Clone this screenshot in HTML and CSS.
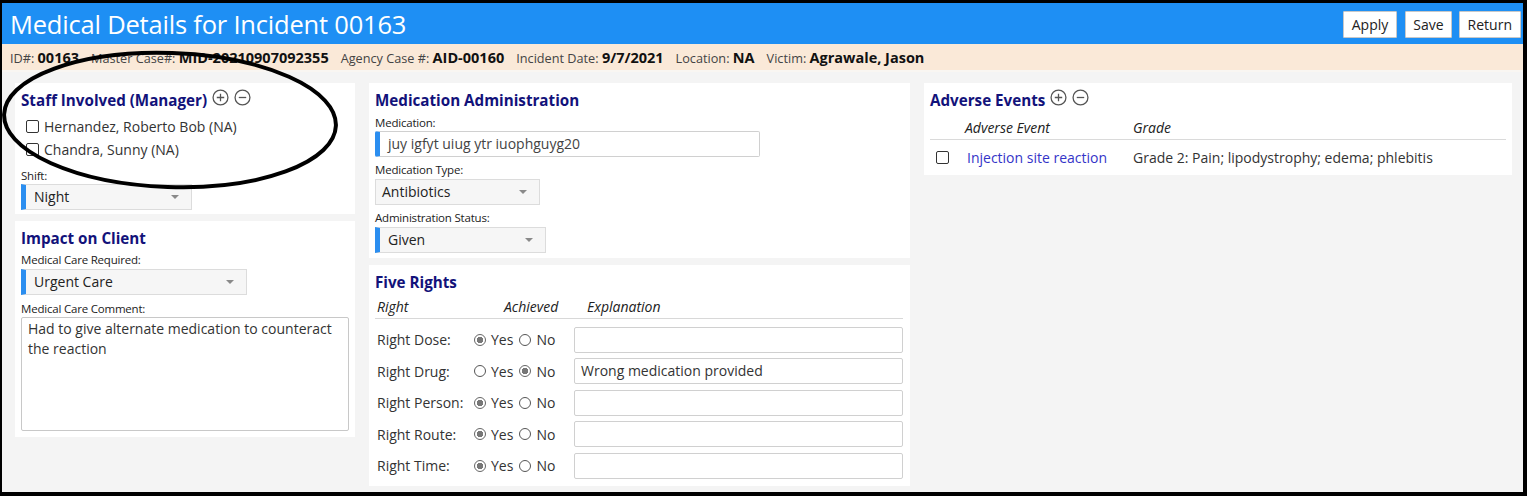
FILE: index.html
```html
<!DOCTYPE html>
<html>
<head>
<meta charset="utf-8">
<title>Medical Details for Incident 00163</title>
<link rel="stylesheet" href="styles.css">
</head>
<body>
<div class="frame">
  <header class="titlebar">
    <h1 class="page-title">Medical Details for Incident 00163</h1>
    <div class="actions">
      <button class="btn btn-apply">Apply</button>
      <button class="btn btn-save">Save</button>
      <button class="btn">Return</button>
    </div>
  </header>
  <div class="infobar">
    <span class="info"><span class="info-lbl">ID#:</span> <b>00163</b></span>
    <span class="info"><span class="info-lbl">Master Case#:</span> <b>MID-20210907092355</b></span>
    <span class="info"><span class="info-lbl">Agency Case #:</span> <b>AID-00160</b></span>
    <span class="info"><span class="info-lbl">Incident Date:</span> <b>9/7/2021</b></span>
    <span class="info"><span class="info-lbl">Location:</span> <b>NA</b></span>
    <span class="info"><span class="info-lbl">Victim:</span> <b>Agrawale, Jason</b></span>
  </div>
  <main class="content">
    <div class="col col-left">
      <section class="panel staff">
        <h2 class="panel-title">Staff Involved (Manager)
          <span class="icons">
            <svg class="ico" viewBox="0 0 16 16"><circle cx="8" cy="8" r="7" /><path d="M8 4.5v7M4.5 8h7" /></svg>
            <svg class="ico" viewBox="0 0 16 16"><circle cx="8" cy="8" r="7" /><path d="M4.5 8h7" /></svg>
          </span>
        </h2>
        <label class="check-row"><input type="checkbox" class="cb"> Hernandez, Roberto Bob (NA)</label>
        <label class="check-row"><input type="checkbox" class="cb"> Chandra, Sunny (NA)</label>
        <div class="field-lbl">Shift:</div>
        <div class="select req w-shift"><span>Night</span></div>
      </section>
      <section class="panel impact">
        <h2 class="panel-title">Impact on Client</h2>
        <div class="field-lbl">Medical Care Required:</div>
        <div class="select req w-care"><span>Urgent Care</span></div>
        <div class="field-lbl">Medical Care Comment:</div>
        <div class="textarea">Had to give alternate medication to counteract the reaction</div>
      </section>
    </div>
    <div class="col col-mid">
      <section class="panel medadmin">
        <h2 class="panel-title">Medication Administration</h2>
        <div class="field-lbl">Medication:</div>
        <div class="input req w-med">juy igfyt uiug ytr iuophguyg20</div>
        <div class="field-lbl">Medication Type:</div>
        <div class="select w-type"><span>Antibiotics</span></div>
        <div class="field-lbl">Administration Status:</div>
        <div class="select req w-status"><span>Given</span></div>
      </section>
      <section class="panel rights">
        <h2 class="panel-title">Five Rights</h2>
        <div class="rights-grid">
          <div class="rh rh-right">Right</div>
          <div class="rh rh-ach">Achieved</div>
          <div class="rh rh-exp">Explanation</div>

          <div class="r-lbl">Right Dose:</div>
          <div class="r-opts"><span class="radio on"></span>Yes<span class="radio gap"></span>No</div>
          <div class="input r-inp"></div>

          <div class="r-lbl">Right Drug:</div>
          <div class="r-opts"><span class="radio"></span>Yes<span class="radio on gap"></span>No</div>
          <div class="input r-inp">Wrong medication provided</div>

          <div class="r-lbl">Right Person:</div>
          <div class="r-opts"><span class="radio on"></span>Yes<span class="radio gap"></span>No</div>
          <div class="input r-inp"></div>

          <div class="r-lbl">Right Route:</div>
          <div class="r-opts"><span class="radio on"></span>Yes<span class="radio gap"></span>No</div>
          <div class="input r-inp"></div>

          <div class="r-lbl">Right Time:</div>
          <div class="r-opts"><span class="radio on"></span>Yes<span class="radio gap"></span>No</div>
          <div class="input r-inp"></div>
        </div>
      </section>
    </div>
    <div class="col col-right">
      <section class="panel adverse">
        <h2 class="panel-title">Adverse Events
          <span class="icons">
            <svg class="ico" viewBox="0 0 16 16"><circle cx="8" cy="8" r="7" /><path d="M8 4.5v7M4.5 8h7" /></svg>
            <svg class="ico" viewBox="0 0 16 16"><circle cx="8" cy="8" r="7" /><path d="M4.5 8h7" /></svg>
          </span>
        </h2>
        <div class="ae-grid">
          <div class="ae-h"></div>
          <div class="ae-h">Adverse Event</div>
          <div class="ae-h">Grade</div>
          <div class="ae-c"><input type="checkbox" class="cb"></div>
          <div class="ae-c"><a class="ae-link">Injection site reaction</a></div>
          <div class="ae-c">Grade 2: Pain; lipodystrophy; edema; phlebitis</div>
        </div>
      </section>
    </div>
  </main>
</div>
<svg class="annotation" width="1527" height="496" viewBox="0 0 1527 496">
  <ellipse cx="170" cy="120" rx="166" ry="67" transform="rotate(2 170 120)" />
</svg>
</body>
</html>
```

FILE: styles.css
```css
html, body {
  margin: 0;
  padding: 0;
}
body {
  position: relative;
  width: 1527px;
  height: 496px;
  overflow: hidden;
  font-family: "Open Sans", "Noto Sans", "DejaVu Sans", sans-serif;
  color: #333;
  background: #000;
}
.frame {
  width: 1527px;
  height: 496px;
  box-sizing: border-box;
  border-style: solid;
  border-color: #000;
  border-width: 3px 4px 4px 2px;
  display: flex;
  flex-direction: column;
  background: #f4f4f4;
}
.titlebar {
  height: 41px;
  flex: none;
  background: #1e8ff4;
  display: flex;
  align-items: center;
  justify-content: space-between;
  padding: 0 2px 0 8px;
}
.page-title {
  margin: 0;
  font-size: 25.5px;
  font-weight: 400;
  color: #fff;
  letter-spacing: -0.2px;
}
.actions {
  display: flex;
  gap: 7px;
  padding-top: 2px;
}
.btn {
  height: 27px;
  padding: 0 8px;
  background: #fff;
  border: 1px solid #c8c8c8;
  border-radius: 1px;
  font-family: inherit;
  font-size: 14px;
  color: #222;
}
.btn-apply {
  margin-right: 1px;
}
.btn-save {
  padding: 0 7px;
}
.infobar {
  height: 26px;
  flex: none;
  background: #fae9d8;
  border-bottom: 2px solid #f9f6f2;
  display: flex;
  align-items: center;
  padding-left: 8px;
  font-size: 12.7px;
  color: #444;
}
.info {
  margin-right: 12px;
  white-space: pre;
}
.info b {
  font-size: 14.5px;
  color: #111;
}
.content {
  flex: 1;
  display: flex;
  align-items: flex-start;
  gap: 14px;
  padding: 11px 11px 0 13px;
}
.col {
  display: flex;
  flex-direction: column;
  gap: 7px;
}
.col-left { width: 340px; }
.col-mid { width: 541px; }
.col-right { width: 588px; }
.panel {
  background: #fff;
  padding: 6px 6px 5px;
  box-sizing: border-box;
}
.panel-title {
  margin: 0;
  height: 22px;
  font-size: 15.2px;
  line-height: 22px;
  font-weight: 700;
  color: #12127a;
  white-space: nowrap;
}
.icons {
  display: inline-flex;
  align-items: center;
  height: 22px;
  gap: 5px;
  margin-left: 1px;
  vertical-align: top;
  transform: translateY(-3px);
}
.ico {
  width: 17px;
  height: 17px;
  fill: none;
  stroke: #555;
  stroke-width: 1.2;
}
.check-row {
  display: flex;
  align-items: center;
  height: 23px;
  padding-left: 5px;
  font-size: 14px;
}
.staff .check-row:first-of-type {
  margin-top: 4px;
}
.cb {
  appearance: none;
  -webkit-appearance: none;
  width: 13px;
  height: 13px;
  margin: 0 5px 0 0;
  border: 1px solid #333;
  border-radius: 2px;
  background: #fff;
  box-sizing: border-box;
  flex: none;
}
.field-lbl {
  margin-top: 6px;
  font-size: 11.5px;
  line-height: 14px;
  color: #222;
  letter-spacing: -0.2px;
}
.staff .field-lbl {
  margin-top: 8px;
}
.select, .input {
  position: relative;
  margin-top: 2px;
  height: 26px;
  box-sizing: border-box;
  border: 1px solid #dcdcdc;
  font-size: 14px;
  line-height: 24px;
  color: #222;
  white-space: nowrap;
}
.select {
  background: #f6f6f6;
  padding-left: 6px;
}
.select::after {
  content: "";
  position: absolute;
  right: 12px;
  top: 10px;
  border-left: 4px solid transparent;
  border-right: 4px solid transparent;
  border-top: 4px solid #8a8a8a;
}
.input {
  background: #fff;
  border-color: #d0d0d0;
  border-radius: 2px;
  padding-left: 6px;
}
.req {
  border-left: 5px solid #2b8ef0;
  padding-left: 8px;
}
.w-shift { width: 171px; }
.w-care { width: 226px; }
.w-type { width: 165px; }
.w-status { width: 171px; }
.w-med {
  width: 385px;
  color: #444;
  margin-top: 1px;
  margin-bottom: 1px;
}
.staff {
  padding-bottom: 4px;
}
.staff .select {
  margin-top: 1px;
}
.impact {
  padding-bottom: 6px;
}
.impact .panel-title + .field-lbl {
  margin-top: 4px;
}
.impact .select + .field-lbl {
  margin-top: 7px;
}
.textarea {
  margin-top: 1px;
  height: 114px;
  box-sizing: border-box;
  border: 1px solid #c8c8c8;
  border-radius: 2px;
  padding: 1px 6px;
  font-size: 14px;
  line-height: 20px;
  color: #333;
}
.medadmin .panel-title + .field-lbl {
  margin-top: 5px;
}
.rights {
  padding-bottom: 7px;
}
.rights-grid {
  display: grid;
  grid-template-columns: 99px 100px 329px;
  grid-template-rows: 24px;
  grid-auto-rows: 26px;
  row-gap: 5.5px;
  align-items: center;
  margin-top: 4px;
}
.rh {
  font-style: italic;
  font-size: 14px;
  height: 21px;
  line-height: 20px;
  align-self: start;
  border-bottom: 1px solid #d8d8d8;
  color: #222;
}
.rh-right { padding-left: 2px; }
.rh-ach { padding-left: 30px; }
.rh-exp { padding-left: 13px; }
.r-lbl {
  font-size: 14px;
  padding-left: 2px;
  white-space: nowrap;
}
.r-opts {
  font-size: 14px;
  display: flex;
  align-items: center;
  white-space: pre;
}
.radio {
  display: inline-block;
  width: 12px;
  height: 12px;
  box-sizing: border-box;
  border: 1px solid #555;
  border-radius: 50%;
  margin-right: 5px;
  background: #fff;
  flex: none;
}
.radio.gap {
  margin-left: 6px;
}
.radio.on {
  background: radial-gradient(circle, #777 0 3px, #fff 3.5px);
  border-color: #666;
}
.r-inp {
  margin-top: 0;
  font-size: 14px;
  color: #333;
}
.adverse {
  padding-bottom: 0;
}
.ae-grid {
  display: grid;
  grid-template-columns: 35px 168px 1fr;
  margin-top: 6px;
  font-size: 14px;
}
.ae-h {
  font-style: italic;
  line-height: 21px;
  padding-bottom: 1px;
  border-bottom: 1px solid #dadada;
  color: #222;
}
.ae-c {
  height: 35px;
  display: flex;
  align-items: center;
  color: #333;
}
.ae-c .cb {
  margin-left: 6px;
}
.ae-link {
  color: #3434c8;
  padding-left: 2px;
}
.annotation {
  position: absolute;
  left: 0;
  top: 0;
  pointer-events: none;
}
.annotation ellipse {
  fill: none;
  stroke: #000;
  stroke-width: 4;
}
```
